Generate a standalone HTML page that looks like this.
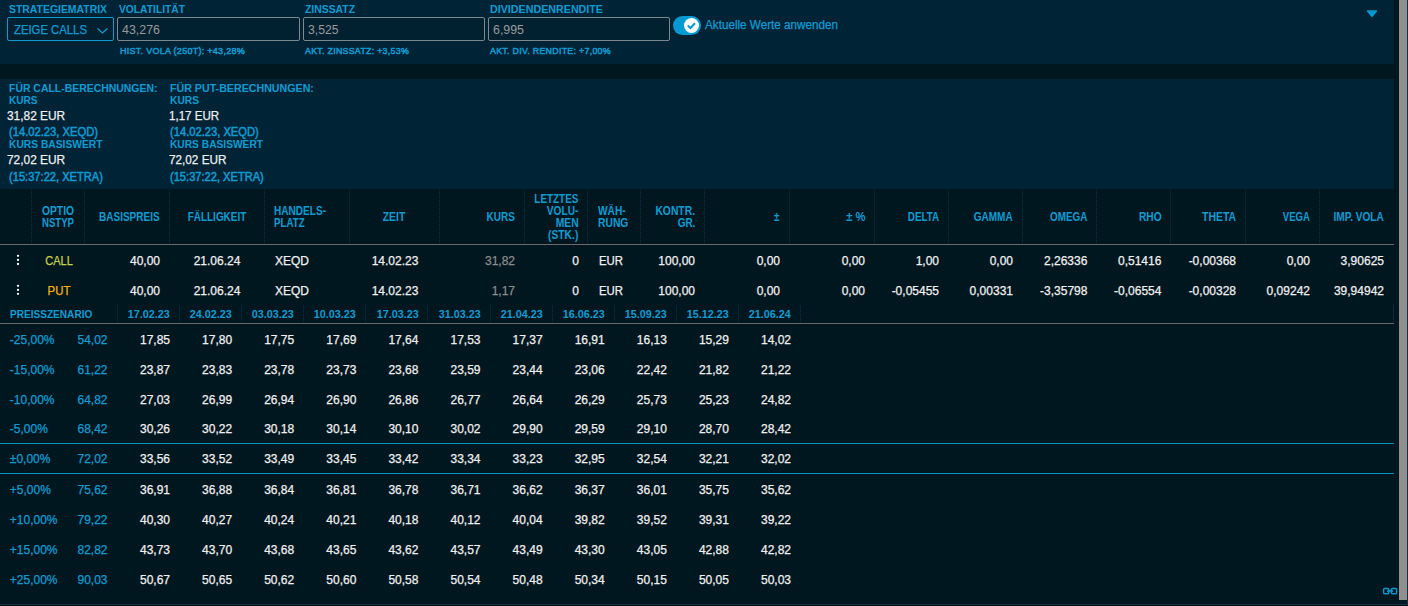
<!DOCTYPE html>
<html><head><meta charset="utf-8">
<style>
html,body{margin:0;padding:0;width:1408px;height:606px;overflow:hidden;background:#011720;font-family:"Liberation Sans",sans-serif;color:#f0f0f0}
.t{position:absolute;white-space:nowrap;-webkit-text-stroke:0.25px}
.s{-webkit-text-stroke:0.5px}
.b{-webkit-text-stroke:0}
.box{position:absolute;box-sizing:border-box}
.vs{position:absolute;width:0;border-left:1px dotted #043650}
.hl{position:absolute;left:0;width:1394px;height:1px}
</style></head><body>
<div class="box" style="left:0;top:0;width:1394px;height:64px;background:#002336"></div>
<div class="box" style="left:0;top:79px;width:1394px;height:110px;background:#002336"></div>
<div class="box" style="left:7px;top:17px;width:107px;height:24px;border:1px solid #0c9cd2;border-radius:2px;background:#012030"></div>
<svg class="box" style="left:96px;top:26px" width="14" height="9" viewBox="0 0 14 9"><path d="M1.5 2.5 L6.5 7 L11.5 2.5" fill="none" stroke="#0c9cd2" stroke-width="1.3"/></svg>
<div class="box" style="left:117px;top:17px;width:183px;height:24px;border:1px solid #7e878b;border-radius:2px;background:#012030"></div>
<div class="box" style="left:303px;top:17px;width:182px;height:24px;border:1px solid #7e878b;border-radius:2px;background:#012030"></div>
<div class="box" style="left:488px;top:17px;width:182px;height:24px;border:1px solid #7e878b;border-radius:2px;background:#012030"></div>
<div class="box" style="left:673px;top:16px;width:28px;height:19px;border-radius:10px;background:#009ad2"></div>
<div class="box" style="left:684px;top:18px;width:15px;height:15px;border-radius:50%;background:#fff"></div>
<svg class="box" style="left:684px;top:18px" width="15" height="15" viewBox="0 0 15 15"><path d="M3.8 7.6 L6.4 10 L11 5.2" fill="none" stroke="#009ad2" stroke-width="2"/></svg>
<svg class="box" style="left:1366px;top:9px" width="12" height="9" viewBox="0 0 12 9"><path d="M1.6 2 L10.4 2 L6 7.2 Z" fill="#009ad2" stroke="#009ad2" stroke-width="1.6" stroke-linejoin="round"/></svg>
<div class="box" style="left:1399px;top:0;width:8px;height:600px;background:#8f8f8f"></div>
<div class="hl" style="top:244px;background:#6a6a6a"></div>
<div class="hl" style="top:323px;background:#6a6a6a"></div>
<div class="hl" style="top:443px;background:#0096c8"></div>
<div class="hl" style="top:473px;background:#0096c8"></div>
<div class="box" style="left:0;top:604px;width:1408px;height:1px;background:#0a3548"></div><div class="box" style="left:1407px;top:0;width:1px;height:605px;background:#053550"></div><div class="box" style="left:0;top:605px;width:1408px;height:1px;background:#000b12"></div><div class="vs" style="left:1393px;top:305px;height:17px"></div>
<div class="vs" style="left:31px;top:190px;height:53px"></div><div class="vs" style="left:84px;top:190px;height:53px"></div><div class="vs" style="left:169px;top:190px;height:53px"></div><div class="vs" style="left:264px;top:190px;height:53px"></div><div class="vs" style="left:349px;top:190px;height:53px"></div><div class="vs" style="left:439px;top:190px;height:53px"></div><div class="vs" style="left:524px;top:190px;height:53px"></div><div class="vs" style="left:587px;top:190px;height:53px"></div><div class="vs" style="left:640px;top:190px;height:53px"></div><div class="vs" style="left:704px;top:190px;height:53px"></div><div class="vs" style="left:789px;top:190px;height:53px"></div><div class="vs" style="left:874px;top:190px;height:53px"></div><div class="vs" style="left:948px;top:190px;height:53px"></div><div class="vs" style="left:1022px;top:190px;height:53px"></div><div class="vs" style="left:1096px;top:190px;height:53px"></div><div class="vs" style="left:1170px;top:190px;height:53px"></div><div class="vs" style="left:1245px;top:190px;height:53px"></div><div class="vs" style="left:1319px;top:190px;height:53px"></div><div class="vs" style="left:117px;top:305px;height:17px"></div><div class="vs" style="left:179px;top:305px;height:17px"></div><div class="vs" style="left:241px;top:305px;height:17px"></div><div class="vs" style="left:303px;top:305px;height:17px"></div><div class="vs" style="left:365px;top:305px;height:17px"></div><div class="vs" style="left:427px;top:305px;height:17px"></div><div class="vs" style="left:490px;top:305px;height:17px"></div><div class="vs" style="left:552px;top:305px;height:17px"></div><div class="vs" style="left:614px;top:305px;height:17px"></div><div class="vs" style="left:676px;top:305px;height:17px"></div><div class="vs" style="left:738px;top:305px;height:17px"></div><div class="vs" style="left:800px;top:305px;height:17px"></div>
<svg class="box" style="left:1382px;top:587px" width="16" height="9" viewBox="0 0 16 9"><rect x="1.6" y="1.5" width="5.2" height="5.2" rx="1" fill="none" stroke="#009ad2" stroke-width="1.4"/><rect x="9.4" y="1.5" width="5.2" height="5.2" rx="1" fill="none" stroke="#009ad2" stroke-width="1.4"/><path d="M5 4.1 L11 4.1" stroke="#009ad2" stroke-width="1.6"/></svg>
<svg class="box" style="left:14px;top:250px" width="8" height="50" viewBox="0 0 8 50"><circle cx="4" cy="5.8" r="1.15" fill="#fff"/><circle cx="4" cy="9.9" r="1.15" fill="#fff"/><circle cx="4" cy="14" r="1.15" fill="#fff"/><circle cx="4" cy="35.8" r="1.15" fill="#fff"/><circle cx="4" cy="39.9" r="1.15" fill="#fff"/><circle cx="4" cy="43.8" r="1.15" fill="#fff"/></svg>
<div class="t b" style="top:4px;font-size:11px;line-height:11px;font-weight:700;color:#0c9cd2;left:9.0px;transform-origin:0 0;transform:scaleX(0.947);">STRATEGIEMATRIX</div>
<div class="t b" style="top:4px;font-size:11px;line-height:11px;font-weight:700;color:#0c9cd2;left:119.2px;transform-origin:0 0;transform:scaleX(0.934);">VOLATILITÄT</div>
<div class="t b" style="top:4px;font-size:11px;line-height:11px;font-weight:700;color:#0c9cd2;left:305.0px;transform-origin:0 0;transform:scaleX(0.944);">ZINSSATZ</div>
<div class="t b" style="top:4px;font-size:11px;line-height:11px;font-weight:700;color:#0c9cd2;left:490.2px;transform-origin:0 0;transform:scaleX(0.973);">DIVIDENDENRENDITE</div>
<div class="t" style="top:24px;font-size:12px;line-height:12px;color:#0c9cd2;left:14.2px;transform-origin:0 0;transform:scaleX(0.943);">ZEIGE CALLS</div>
<div class="t b" style="top:24px;font-size:12px;line-height:12px;color:#9a9a9a;left:122.0px;transform-origin:0 0;transform:scaleX(1.035);">43,276</div>
<div class="t b" style="top:24px;font-size:12px;line-height:12px;color:#9a9a9a;left:307.5px;transform-origin:0 0;transform:scaleX(1.016);">3,525</div>
<div class="t b" style="top:24px;font-size:12px;line-height:12px;color:#9a9a9a;left:492.8px;transform-origin:0 0;transform:scaleX(1.032);">6,995</div>
<div class="t s" style="top:46.0px;font-size:9.5px;line-height:9.5px;color:#0c9cd2;letter-spacing:0.3px;left:119.7px;transform-origin:0 0;transform:scaleX(0.946);">HIST. VOLA (250T): +43,28%</div>
<div class="t s" style="top:46.0px;font-size:9.5px;line-height:9.5px;color:#0c9cd2;letter-spacing:0.3px;left:305.0px;transform-origin:0 0;transform:scaleX(0.929);">AKT. ZINSSATZ: +3,53%</div>
<div class="t s" style="top:46.0px;font-size:9.5px;line-height:9.5px;color:#0c9cd2;letter-spacing:0.3px;left:490.0px;transform-origin:0 0;transform:scaleX(0.931);">AKT. DIV. RENDITE: +7,00%</div>
<div class="t" style="top:19px;font-size:12px;line-height:12px;color:#0c9cd2;left:705.3px;transform-origin:0 0;transform:scaleX(0.974);">Aktuelle Werte anwenden</div>
<div class="t b" style="top:83px;font-size:11px;line-height:11px;font-weight:700;color:#0c9cd2;left:9.0px;transform-origin:0 0;transform:scaleX(0.949);">FÜR CALL-BERECHNUNGEN:</div>
<div class="t b" style="top:95px;font-size:11px;line-height:11px;font-weight:700;color:#0c9cd2;left:9.0px;transform-origin:0 0;transform:scaleX(0.917);">KURS</div>
<div class="t" style="top:109px;font-size:13px;line-height:13px;left:7.1px;transform-origin:0 0;transform:scaleX(0.915);">31,82 EUR</div>
<div class="t s" style="top:126px;font-size:12px;line-height:12px;color:#0c9cd2;left:9.0px;transform-origin:0 0;transform:scaleX(0.933);">(14.02.23, XEQD)</div>
<div class="t b" style="top:139px;font-size:11px;line-height:11px;font-weight:700;color:#0c9cd2;left:9.0px;transform-origin:0 0;transform:scaleX(0.932);">KURS BASISWERT</div>
<div class="t" style="top:153px;font-size:13px;line-height:13px;left:7.1px;transform-origin:0 0;transform:scaleX(0.915);">72,02 EUR</div>
<div class="t s" style="top:171px;font-size:12px;line-height:12px;color:#0c9cd2;left:9.0px;transform-origin:0 0;transform:scaleX(0.927);">(15:37:22, XETRA)</div>
<div class="t b" style="top:83px;font-size:11px;line-height:11px;font-weight:700;color:#0c9cd2;left:169.6px;transform-origin:0 0;transform:scaleX(0.969);">FÜR PUT-BERECHNUNGEN:</div>
<div class="t b" style="top:95px;font-size:11px;line-height:11px;font-weight:700;color:#0c9cd2;left:169.6px;transform-origin:0 0;transform:scaleX(0.930);">KURS</div>
<div class="t" style="top:109px;font-size:13px;line-height:13px;left:168.9px;transform-origin:0 0;transform:scaleX(0.889);">1,17 EUR</div>
<div class="t s" style="top:126px;font-size:12px;line-height:12px;color:#0c9cd2;left:169.6px;transform-origin:0 0;transform:scaleX(0.931);">(14.02.23, XEQD)</div>
<div class="t b" style="top:139px;font-size:11px;line-height:11px;font-weight:700;color:#0c9cd2;left:169.6px;transform-origin:0 0;transform:scaleX(0.928);">KURS BASISWERT</div>
<div class="t" style="top:153px;font-size:13px;line-height:13px;left:168.9px;transform-origin:0 0;transform:scaleX(0.903);">72,02 EUR</div>
<div class="t s" style="top:171px;font-size:12px;line-height:12px;color:#0c9cd2;left:169.6px;transform-origin:0 0;transform:scaleX(0.925);">(15:37:22, XETRA)</div>
<div class="t b" style="top:205px;font-size:12px;line-height:12px;font-weight:700;color:#0c9cd2;left:58.0px;transform:translateX(-50%) scaleX(0.857);">OPTIO</div>
<div class="t b" style="top:217px;font-size:12px;line-height:12px;font-weight:700;color:#0c9cd2;left:58.0px;transform:translateX(-50%) scaleX(0.800);">NSTYP</div>
<div class="t b" style="top:211px;font-size:12px;line-height:12px;font-weight:700;color:#0c9cd2;right:1248.0px;transform-origin:100% 0;transform:scaleX(0.835);">BASISPREIS</div>
<div class="t b" style="top:211px;font-size:12px;line-height:12px;font-weight:700;color:#0c9cd2;left:216.7px;transform:translateX(-50%) scaleX(0.829);">FÄLLIGKEIT</div>
<div class="t b" style="top:205px;font-size:12px;line-height:12px;font-weight:700;color:#0c9cd2;left:274.4px;transform-origin:0 0;transform:scaleX(0.839);">HANDELS-</div>
<div class="t b" style="top:217px;font-size:12px;line-height:12px;font-weight:700;color:#0c9cd2;left:274.4px;transform-origin:0 0;transform:scaleX(0.810);">PLATZ</div>
<div class="t b" style="top:211px;font-size:12px;line-height:12px;font-weight:700;color:#0c9cd2;left:394.4px;transform:translateX(-50%) scaleX(0.862);">ZEIT</div>
<div class="t b" style="top:211px;font-size:12px;line-height:12px;font-weight:700;color:#0c9cd2;right:893.0px;transform-origin:100% 0;transform:scaleX(0.835);">KURS</div>
<div class="t b" style="top:193px;font-size:12px;line-height:12px;font-weight:700;color:#0c9cd2;right:829.7px;transform-origin:100% 0;transform:scaleX(0.825);">LETZTES</div>
<div class="t b" style="top:205px;font-size:12px;line-height:12px;font-weight:700;color:#0c9cd2;right:829.7px;transform-origin:100% 0;transform:scaleX(0.844);">VOLU-</div>
<div class="t b" style="top:217px;font-size:12px;line-height:12px;font-weight:700;color:#0c9cd2;right:829.7px;transform-origin:100% 0;transform:scaleX(0.862);">MEN</div>
<div class="t b" style="top:229px;font-size:12px;line-height:12px;font-weight:700;color:#0c9cd2;right:829.7px;transform-origin:100% 0;transform:scaleX(0.858);">(STK.)</div>
<div class="t b" style="top:205px;font-size:12px;line-height:12px;font-weight:700;color:#0c9cd2;left:597.8px;transform-origin:0 0;transform:scaleX(0.848);">WÄH-</div>
<div class="t b" style="top:217px;font-size:12px;line-height:12px;font-weight:700;color:#0c9cd2;left:597.8px;transform-origin:0 0;transform:scaleX(0.860);">RUNG</div>
<div class="t b" style="top:205px;font-size:12px;line-height:12px;font-weight:700;color:#0c9cd2;right:713.0px;transform-origin:100% 0;transform:scaleX(0.861);">KONTR.</div>
<div class="t b" style="top:217px;font-size:12px;line-height:12px;font-weight:700;color:#0c9cd2;right:713.0px;transform-origin:100% 0;transform:scaleX(0.830);">GR.</div>
<div class="t b" style="top:211px;font-size:12px;line-height:12px;font-weight:700;color:#0c9cd2;right:628.0px;transform-origin:100% 0;transform:scaleX(0.830);">±</div>
<div class="t b" style="top:211px;font-size:12px;line-height:12px;font-weight:700;color:#0c9cd2;right:542.8px;transform-origin:100% 0;transform:scaleX(0.937);">± %</div>
<div class="t b" style="top:211px;font-size:12px;line-height:12px;font-weight:700;color:#0c9cd2;right:469.0px;transform-origin:100% 0;transform:scaleX(0.822);">DELTA</div>
<div class="t b" style="top:211px;font-size:12px;line-height:12px;font-weight:700;color:#0c9cd2;right:395.0px;transform-origin:100% 0;transform:scaleX(0.836);">GAMMA</div>
<div class="t b" style="top:211px;font-size:12px;line-height:12px;font-weight:700;color:#0c9cd2;right:321.0px;transform-origin:100% 0;transform:scaleX(0.823);">OMEGA</div>
<div class="t b" style="top:211px;font-size:12px;line-height:12px;font-weight:700;color:#0c9cd2;right:246.5px;transform-origin:100% 0;transform:scaleX(0.851);">RHO</div>
<div class="t b" style="top:211px;font-size:12px;line-height:12px;font-weight:700;color:#0c9cd2;right:172.0px;transform-origin:100% 0;transform:scaleX(0.869);">THETA</div>
<div class="t b" style="top:211px;font-size:12px;line-height:12px;font-weight:700;color:#0c9cd2;right:98.3px;transform-origin:100% 0;transform:scaleX(0.800);">VEGA</div>
<div class="t b" style="top:211px;font-size:12px;line-height:12px;font-weight:700;color:#0c9cd2;right:23.8px;transform-origin:100% 0;transform:scaleX(0.840);">IMP. VOLA</div>
<div class="t" style="top:255px;font-size:12px;line-height:12px;color:#c5d24a;left:58.8px;transform:translateX(-50%) scaleX(0.916);">CALL</div>
<div class="t" style="top:255px;font-size:12px;line-height:12px;right:1248.0px;">40,00</div>
<div class="t" style="top:255px;font-size:12px;line-height:12px;left:217.0px;transform:translateX(-50%);">21.06.24</div>
<div class="t" style="top:255px;font-size:12px;line-height:12px;left:274.9px;">XEQD</div>
<div class="t" style="top:255px;font-size:12px;line-height:12px;left:395.0px;transform:translateX(-50%);">14.02.23</div>
<div class="t" style="top:255px;font-size:12px;line-height:12px;color:#8c8c8c;right:893.0px;">31,82</div>
<div class="t" style="top:255px;font-size:12px;line-height:12px;right:829.0px;">0</div>
<div class="t" style="top:255px;font-size:12px;line-height:12px;left:598.6px;transform-origin:0 0;transform:scaleX(0.947);">EUR</div>
<div class="t" style="top:255px;font-size:12px;line-height:12px;right:713.0px;">100,00</div>
<div class="t" style="top:255px;font-size:12px;line-height:12px;right:628.0px;">0,00</div>
<div class="t" style="top:255px;font-size:12px;line-height:12px;right:543.0px;">0,00</div>
<div class="t" style="top:255px;font-size:12px;line-height:12px;right:469.0px;">1,00</div>
<div class="t" style="top:255px;font-size:12px;line-height:12px;right:395.0px;">0,00</div>
<div class="t" style="top:255px;font-size:12px;line-height:12px;right:320.6px;">2,26336</div>
<div class="t" style="top:255px;font-size:12px;line-height:12px;right:246.6px;">0,51416</div>
<div class="t" style="top:255px;font-size:12px;line-height:12px;right:172.0px;">-0,00368</div>
<div class="t" style="top:255px;font-size:12px;line-height:12px;right:98.0px;">0,00</div>
<div class="t" style="top:255px;font-size:12px;line-height:12px;right:24.0px;">3,90625</div>
<div class="t" style="top:285px;font-size:12px;line-height:12px;color:#f5b400;left:58.8px;transform:translateX(-50%) scaleX(0.950);">PUT</div>
<div class="t" style="top:285px;font-size:12px;line-height:12px;right:1248.0px;">40,00</div>
<div class="t" style="top:285px;font-size:12px;line-height:12px;left:217.0px;transform:translateX(-50%);">21.06.24</div>
<div class="t" style="top:285px;font-size:12px;line-height:12px;left:274.9px;">XEQD</div>
<div class="t" style="top:285px;font-size:12px;line-height:12px;left:395.0px;transform:translateX(-50%);">14.02.23</div>
<div class="t" style="top:285px;font-size:12px;line-height:12px;color:#8c8c8c;right:893.0px;">1,17</div>
<div class="t" style="top:285px;font-size:12px;line-height:12px;right:829.0px;">0</div>
<div class="t" style="top:285px;font-size:12px;line-height:12px;left:598.6px;transform-origin:0 0;transform:scaleX(0.947);">EUR</div>
<div class="t" style="top:285px;font-size:12px;line-height:12px;right:713.0px;">100,00</div>
<div class="t" style="top:285px;font-size:12px;line-height:12px;right:628.0px;">0,00</div>
<div class="t" style="top:285px;font-size:12px;line-height:12px;right:543.0px;">0,00</div>
<div class="t" style="top:285px;font-size:12px;line-height:12px;right:469.0px;">-0,05455</div>
<div class="t" style="top:285px;font-size:12px;line-height:12px;right:395.0px;">0,00331</div>
<div class="t" style="top:285px;font-size:12px;line-height:12px;right:320.6px;">-3,35798</div>
<div class="t" style="top:285px;font-size:12px;line-height:12px;right:246.6px;">-0,06554</div>
<div class="t" style="top:285px;font-size:12px;line-height:12px;right:172.0px;">-0,00328</div>
<div class="t" style="top:285px;font-size:12px;line-height:12px;right:98.0px;">0,09242</div>
<div class="t" style="top:285px;font-size:12px;line-height:12px;right:24.0px;">39,94942</div>
<div class="t b" style="top:309px;font-size:11px;line-height:11px;font-weight:700;color:#0c9cd2;left:9.7px;transform-origin:0 0;transform:scaleX(0.916);">PREISSZENARIO</div>
<div class="t b" style="top:309px;font-size:11px;line-height:11px;font-weight:700;color:#0c9cd2;right:1238.0px;transform-origin:100% 0;transform:scaleX(0.981);">17.02.23</div>
<div class="t b" style="top:309px;font-size:11px;line-height:11px;font-weight:700;color:#0c9cd2;right:1175.9px;transform-origin:100% 0;transform:scaleX(0.981);">24.02.23</div>
<div class="t b" style="top:309px;font-size:11px;line-height:11px;font-weight:700;color:#0c9cd2;right:1113.8px;transform-origin:100% 0;transform:scaleX(0.981);">03.03.23</div>
<div class="t b" style="top:309px;font-size:11px;line-height:11px;font-weight:700;color:#0c9cd2;right:1051.7px;transform-origin:100% 0;transform:scaleX(0.981);">10.03.23</div>
<div class="t b" style="top:309px;font-size:11px;line-height:11px;font-weight:700;color:#0c9cd2;right:989.6px;transform-origin:100% 0;transform:scaleX(0.981);">17.03.23</div>
<div class="t b" style="top:309px;font-size:11px;line-height:11px;font-weight:700;color:#0c9cd2;right:927.5px;transform-origin:100% 0;transform:scaleX(0.981);">31.03.23</div>
<div class="t b" style="top:309px;font-size:11px;line-height:11px;font-weight:700;color:#0c9cd2;right:865.4px;transform-origin:100% 0;transform:scaleX(0.981);">21.04.23</div>
<div class="t b" style="top:309px;font-size:11px;line-height:11px;font-weight:700;color:#0c9cd2;right:803.3px;transform-origin:100% 0;transform:scaleX(0.981);">16.06.23</div>
<div class="t b" style="top:309px;font-size:11px;line-height:11px;font-weight:700;color:#0c9cd2;right:741.2px;transform-origin:100% 0;transform:scaleX(0.981);">15.09.23</div>
<div class="t b" style="top:309px;font-size:11px;line-height:11px;font-weight:700;color:#0c9cd2;right:679.1px;transform-origin:100% 0;transform:scaleX(0.981);">15.12.23</div>
<div class="t b" style="top:309px;font-size:11px;line-height:11px;font-weight:700;color:#0c9cd2;right:617.0px;transform-origin:100% 0;transform:scaleX(0.981);">21.06.24</div>
<div class="t" style="top:334px;font-size:12px;line-height:12px;color:#0c9cd2;left:9.8px;">-25,00%</div>
<div class="t" style="top:334px;font-size:12px;line-height:12px;color:#0c9cd2;right:1300.5px;">54,02</div>
<div class="t" style="top:334px;font-size:12px;line-height:12px;right:1238.0px;">17,85</div>
<div class="t" style="top:334px;font-size:12px;line-height:12px;right:1175.9px;">17,80</div>
<div class="t" style="top:334px;font-size:12px;line-height:12px;right:1113.8px;">17,75</div>
<div class="t" style="top:334px;font-size:12px;line-height:12px;right:1051.7px;">17,69</div>
<div class="t" style="top:334px;font-size:12px;line-height:12px;right:989.6px;">17,64</div>
<div class="t" style="top:334px;font-size:12px;line-height:12px;right:927.5px;">17,53</div>
<div class="t" style="top:334px;font-size:12px;line-height:12px;right:865.4px;">17,37</div>
<div class="t" style="top:334px;font-size:12px;line-height:12px;right:803.3px;">16,91</div>
<div class="t" style="top:334px;font-size:12px;line-height:12px;right:741.2px;">16,13</div>
<div class="t" style="top:334px;font-size:12px;line-height:12px;right:679.1px;">15,29</div>
<div class="t" style="top:334px;font-size:12px;line-height:12px;right:617.0px;">14,02</div>
<div class="t" style="top:364px;font-size:12px;line-height:12px;color:#0c9cd2;left:9.8px;">-15,00%</div>
<div class="t" style="top:364px;font-size:12px;line-height:12px;color:#0c9cd2;right:1300.5px;">61,22</div>
<div class="t" style="top:364px;font-size:12px;line-height:12px;right:1238.0px;">23,87</div>
<div class="t" style="top:364px;font-size:12px;line-height:12px;right:1175.9px;">23,83</div>
<div class="t" style="top:364px;font-size:12px;line-height:12px;right:1113.8px;">23,78</div>
<div class="t" style="top:364px;font-size:12px;line-height:12px;right:1051.7px;">23,73</div>
<div class="t" style="top:364px;font-size:12px;line-height:12px;right:989.6px;">23,68</div>
<div class="t" style="top:364px;font-size:12px;line-height:12px;right:927.5px;">23,59</div>
<div class="t" style="top:364px;font-size:12px;line-height:12px;right:865.4px;">23,44</div>
<div class="t" style="top:364px;font-size:12px;line-height:12px;right:803.3px;">23,06</div>
<div class="t" style="top:364px;font-size:12px;line-height:12px;right:741.2px;">22,42</div>
<div class="t" style="top:364px;font-size:12px;line-height:12px;right:679.1px;">21,82</div>
<div class="t" style="top:364px;font-size:12px;line-height:12px;right:617.0px;">21,22</div>
<div class="t" style="top:394px;font-size:12px;line-height:12px;color:#0c9cd2;left:9.8px;">-10,00%</div>
<div class="t" style="top:394px;font-size:12px;line-height:12px;color:#0c9cd2;right:1300.5px;">64,82</div>
<div class="t" style="top:394px;font-size:12px;line-height:12px;right:1238.0px;">27,03</div>
<div class="t" style="top:394px;font-size:12px;line-height:12px;right:1175.9px;">26,99</div>
<div class="t" style="top:394px;font-size:12px;line-height:12px;right:1113.8px;">26,94</div>
<div class="t" style="top:394px;font-size:12px;line-height:12px;right:1051.7px;">26,90</div>
<div class="t" style="top:394px;font-size:12px;line-height:12px;right:989.6px;">26,86</div>
<div class="t" style="top:394px;font-size:12px;line-height:12px;right:927.5px;">26,77</div>
<div class="t" style="top:394px;font-size:12px;line-height:12px;right:865.4px;">26,64</div>
<div class="t" style="top:394px;font-size:12px;line-height:12px;right:803.3px;">26,29</div>
<div class="t" style="top:394px;font-size:12px;line-height:12px;right:741.2px;">25,73</div>
<div class="t" style="top:394px;font-size:12px;line-height:12px;right:679.1px;">25,23</div>
<div class="t" style="top:394px;font-size:12px;line-height:12px;right:617.0px;">24,82</div>
<div class="t" style="top:423px;font-size:12px;line-height:12px;color:#0c9cd2;left:9.8px;">-5,00%</div>
<div class="t" style="top:423px;font-size:12px;line-height:12px;color:#0c9cd2;right:1300.5px;">68,42</div>
<div class="t" style="top:423px;font-size:12px;line-height:12px;right:1238.0px;">30,26</div>
<div class="t" style="top:423px;font-size:12px;line-height:12px;right:1175.9px;">30,22</div>
<div class="t" style="top:423px;font-size:12px;line-height:12px;right:1113.8px;">30,18</div>
<div class="t" style="top:423px;font-size:12px;line-height:12px;right:1051.7px;">30,14</div>
<div class="t" style="top:423px;font-size:12px;line-height:12px;right:989.6px;">30,10</div>
<div class="t" style="top:423px;font-size:12px;line-height:12px;right:927.5px;">30,02</div>
<div class="t" style="top:423px;font-size:12px;line-height:12px;right:865.4px;">29,90</div>
<div class="t" style="top:423px;font-size:12px;line-height:12px;right:803.3px;">29,59</div>
<div class="t" style="top:423px;font-size:12px;line-height:12px;right:741.2px;">29,10</div>
<div class="t" style="top:423px;font-size:12px;line-height:12px;right:679.1px;">28,70</div>
<div class="t" style="top:423px;font-size:12px;line-height:12px;right:617.0px;">28,42</div>
<div class="t" style="top:453px;font-size:12px;line-height:12px;color:#0c9cd2;left:9.8px;">±0,00%</div>
<div class="t" style="top:453px;font-size:12px;line-height:12px;color:#0c9cd2;right:1300.5px;">72,02</div>
<div class="t" style="top:453px;font-size:12px;line-height:12px;right:1238.0px;">33,56</div>
<div class="t" style="top:453px;font-size:12px;line-height:12px;right:1175.9px;">33,52</div>
<div class="t" style="top:453px;font-size:12px;line-height:12px;right:1113.8px;">33,49</div>
<div class="t" style="top:453px;font-size:12px;line-height:12px;right:1051.7px;">33,45</div>
<div class="t" style="top:453px;font-size:12px;line-height:12px;right:989.6px;">33,42</div>
<div class="t" style="top:453px;font-size:12px;line-height:12px;right:927.5px;">33,34</div>
<div class="t" style="top:453px;font-size:12px;line-height:12px;right:865.4px;">33,23</div>
<div class="t" style="top:453px;font-size:12px;line-height:12px;right:803.3px;">32,95</div>
<div class="t" style="top:453px;font-size:12px;line-height:12px;right:741.2px;">32,54</div>
<div class="t" style="top:453px;font-size:12px;line-height:12px;right:679.1px;">32,21</div>
<div class="t" style="top:453px;font-size:12px;line-height:12px;right:617.0px;">32,02</div>
<div class="t" style="top:484px;font-size:12px;line-height:12px;color:#0c9cd2;left:9.8px;">+5,00%</div>
<div class="t" style="top:484px;font-size:12px;line-height:12px;color:#0c9cd2;right:1300.5px;">75,62</div>
<div class="t" style="top:484px;font-size:12px;line-height:12px;right:1238.0px;">36,91</div>
<div class="t" style="top:484px;font-size:12px;line-height:12px;right:1175.9px;">36,88</div>
<div class="t" style="top:484px;font-size:12px;line-height:12px;right:1113.8px;">36,84</div>
<div class="t" style="top:484px;font-size:12px;line-height:12px;right:1051.7px;">36,81</div>
<div class="t" style="top:484px;font-size:12px;line-height:12px;right:989.6px;">36,78</div>
<div class="t" style="top:484px;font-size:12px;line-height:12px;right:927.5px;">36,71</div>
<div class="t" style="top:484px;font-size:12px;line-height:12px;right:865.4px;">36,62</div>
<div class="t" style="top:484px;font-size:12px;line-height:12px;right:803.3px;">36,37</div>
<div class="t" style="top:484px;font-size:12px;line-height:12px;right:741.2px;">36,01</div>
<div class="t" style="top:484px;font-size:12px;line-height:12px;right:679.1px;">35,75</div>
<div class="t" style="top:484px;font-size:12px;line-height:12px;right:617.0px;">35,62</div>
<div class="t" style="top:514px;font-size:12px;line-height:12px;color:#0c9cd2;left:9.8px;">+10,00%</div>
<div class="t" style="top:514px;font-size:12px;line-height:12px;color:#0c9cd2;right:1300.5px;">79,22</div>
<div class="t" style="top:514px;font-size:12px;line-height:12px;right:1238.0px;">40,30</div>
<div class="t" style="top:514px;font-size:12px;line-height:12px;right:1175.9px;">40,27</div>
<div class="t" style="top:514px;font-size:12px;line-height:12px;right:1113.8px;">40,24</div>
<div class="t" style="top:514px;font-size:12px;line-height:12px;right:1051.7px;">40,21</div>
<div class="t" style="top:514px;font-size:12px;line-height:12px;right:989.6px;">40,18</div>
<div class="t" style="top:514px;font-size:12px;line-height:12px;right:927.5px;">40,12</div>
<div class="t" style="top:514px;font-size:12px;line-height:12px;right:865.4px;">40,04</div>
<div class="t" style="top:514px;font-size:12px;line-height:12px;right:803.3px;">39,82</div>
<div class="t" style="top:514px;font-size:12px;line-height:12px;right:741.2px;">39,52</div>
<div class="t" style="top:514px;font-size:12px;line-height:12px;right:679.1px;">39,31</div>
<div class="t" style="top:514px;font-size:12px;line-height:12px;right:617.0px;">39,22</div>
<div class="t" style="top:544px;font-size:12px;line-height:12px;color:#0c9cd2;left:9.8px;">+15,00%</div>
<div class="t" style="top:544px;font-size:12px;line-height:12px;color:#0c9cd2;right:1300.5px;">82,82</div>
<div class="t" style="top:544px;font-size:12px;line-height:12px;right:1238.0px;">43,73</div>
<div class="t" style="top:544px;font-size:12px;line-height:12px;right:1175.9px;">43,70</div>
<div class="t" style="top:544px;font-size:12px;line-height:12px;right:1113.8px;">43,68</div>
<div class="t" style="top:544px;font-size:12px;line-height:12px;right:1051.7px;">43,65</div>
<div class="t" style="top:544px;font-size:12px;line-height:12px;right:989.6px;">43,62</div>
<div class="t" style="top:544px;font-size:12px;line-height:12px;right:927.5px;">43,57</div>
<div class="t" style="top:544px;font-size:12px;line-height:12px;right:865.4px;">43,49</div>
<div class="t" style="top:544px;font-size:12px;line-height:12px;right:803.3px;">43,30</div>
<div class="t" style="top:544px;font-size:12px;line-height:12px;right:741.2px;">43,05</div>
<div class="t" style="top:544px;font-size:12px;line-height:12px;right:679.1px;">42,88</div>
<div class="t" style="top:544px;font-size:12px;line-height:12px;right:617.0px;">42,82</div>
<div class="t" style="top:574px;font-size:12px;line-height:12px;color:#0c9cd2;left:9.8px;">+25,00%</div>
<div class="t" style="top:574px;font-size:12px;line-height:12px;color:#0c9cd2;right:1300.5px;">90,03</div>
<div class="t" style="top:574px;font-size:12px;line-height:12px;right:1238.0px;">50,67</div>
<div class="t" style="top:574px;font-size:12px;line-height:12px;right:1175.9px;">50,65</div>
<div class="t" style="top:574px;font-size:12px;line-height:12px;right:1113.8px;">50,62</div>
<div class="t" style="top:574px;font-size:12px;line-height:12px;right:1051.7px;">50,60</div>
<div class="t" style="top:574px;font-size:12px;line-height:12px;right:989.6px;">50,58</div>
<div class="t" style="top:574px;font-size:12px;line-height:12px;right:927.5px;">50,54</div>
<div class="t" style="top:574px;font-size:12px;line-height:12px;right:865.4px;">50,48</div>
<div class="t" style="top:574px;font-size:12px;line-height:12px;right:803.3px;">50,34</div>
<div class="t" style="top:574px;font-size:12px;line-height:12px;right:741.2px;">50,15</div>
<div class="t" style="top:574px;font-size:12px;line-height:12px;right:679.1px;">50,05</div>
<div class="t" style="top:574px;font-size:12px;line-height:12px;right:617.0px;">50,03</div>
</body></html>
